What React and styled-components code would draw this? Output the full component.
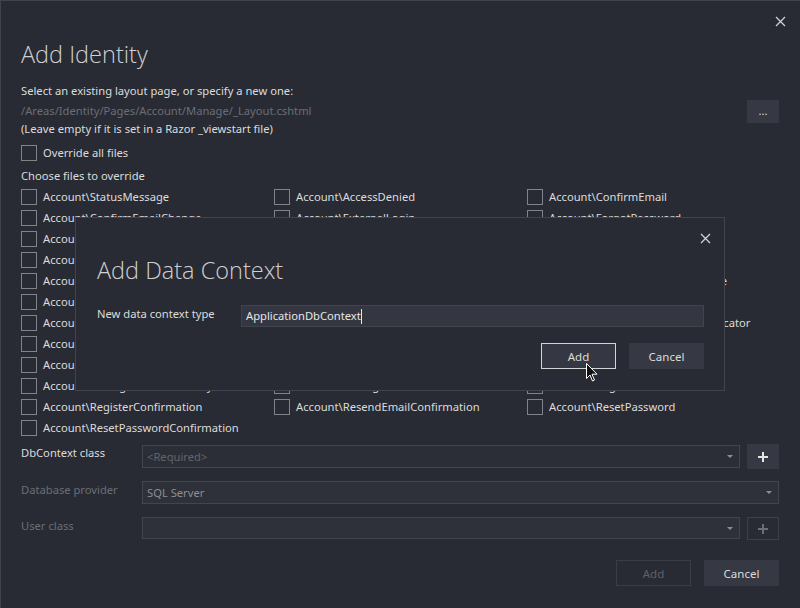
import React from 'react'
import styled, { createGlobalStyle, css } from 'styled-components'

const GlobalStyle = createGlobalStyle`
  html, body {
    margin: 0;
    padding: 0;
    background: #282b33;
  }
  body {
    font-family: "Noto Sans", "Open Sans", sans-serif;
    font-size: 11.2px;
    color: #dcdcdc;
  }
`

const files = [
  'StatusMessage', 'AccessDenied', 'ConfirmEmail',
  'ConfirmEmailChange', 'ExternalLogin', 'ForgotPassword',
  'ForgotPasswordConfirmation', 'Lockout', 'Login',
  'LoginWith2fa', 'LoginWithRecoveryCode', 'Logout',
  'Manage\\_Layout', 'Manage\\_ManageNav', 'Manage\\_StatusMessage',
  'Manage\\ChangePassword', 'Manage\\DeletePersonalData', 'Manage\\Disable2fa',
  'Manage\\DownloadPersonalData', 'Manage\\Email', 'Manage\\EnableAuthenticator',
  'Manage\\ExternalLogins', 'Manage\\GenerateRecoveryCodes', 'Manage\\Index',
  'Manage\\PersonalData', 'Manage\\ResetAuthenticator', 'Manage\\SetPassword',
  'Manage\\ShowRecoveryCodes', 'Manage\\TwoFactorAuthentication', 'Register',
  'RegisterConfirmation', 'ResendEmailConfirmation', 'ResetPassword',
  'ResetPasswordConfirmation'
]

const Window = styled.div`
  position: relative;
  box-sizing: border-box;
  width: 800px;
  height: 608px;
  padding: 37px 21px 0 20px;
  border-top: 1px solid #40434b;
  border-left: 1px solid #40434b;
  background: #282b33;
  display: flex;
  flex-direction: column;
  overflow: hidden;
`

const CloseButton = styled.button`
  position: absolute;
  top: ${p => p.$top}px;
  right: ${p => p.$right}px;
  width: 16px;
  height: 16px;
  padding: 0;
  border: 0;
  background: transparent;
  display: flex;
  align-items: center;
  justify-content: center;
`

const Title = styled.h1`
  margin: 0;
  font-family: "Open Sans", "Noto Sans", sans-serif;
  font-weight: 300;
  font-size: 23.5px;
  line-height: 32px;
  color: #cfd0d2;
`

const LayoutBlock = styled.div`
  margin-top: 12px;
  display: grid;
  grid-template-columns: 1fr 32px;
  align-items: center;
`

const Lines = styled.div`
  display: flex;
  flex-direction: column;
`

const Line = styled.div`
  line-height: 18px;
  margin-top: ${p => p.$mt || 0}px;
  color: ${p => (p.$dim ? '#6b6e76' : '#dcdcdc')};
`

const SmallButton = styled.button`
  width: 32px;
  height: 23px;
  margin-top: 2px;
  padding: 0;
  border: 0;
  background: #363943;
  color: #dcdcdc;
  font-family: inherit;
  font-size: 11px;
  line-height: 14px;
`

const CheckRow = styled.label`
  display: flex;
  align-items: center;
  height: ${p => p.$h || 21}px;
  white-space: nowrap;
  overflow: hidden;
`

const Box = styled.span`
  box-sizing: border-box;
  flex: none;
  width: 16px;
  height: 16px;
  border: 1px solid #80838a;
  margin-right: 6px;
`

const CheckText = styled.span`
  line-height: 18px;
  color: #dcdcdc;
`

const Override = styled.div`
  margin-top: 6px;
`

const SectionLabel = styled.div`
  margin-top: 5px;
  line-height: 18px;
`

const FileGrid = styled.div`
  margin-top: 1px;
  display: grid;
  grid-template-columns: repeat(3, 253px);
  grid-auto-rows: 21px;
`

const FormRow = styled.div`
  display: grid;
  grid-template-columns: 121px 1fr ${p => (p.$button ? '39px' : '')};
  align-items: start;
  margin-top: ${p => p.$mt}px;
`

const FieldLabel = styled.div`
  line-height: 18px;
  padding-top: ${p => p.$pt || 0}px;
  color: ${p => (p.$dim ? '#6b6e76' : '#dcdcdc')};
`

const Select = styled.div`
  box-sizing: border-box;
  height: ${p => p.$h || 23}px;
  margin-top: ${p => p.$mt || 0}px;
  border: 1px solid #42454d;
  background: ${p => p.$bg || '#2b2e36'};
  display: flex;
  align-items: center;
  padding: 0 6px 0 4px;
  color: ${p => p.$color || '#dcdcdc'};
  line-height: 18px;
`

const SelectValue = styled.span`
  flex: 1;
`

const Caret = styled.span`
  width: 0;
  height: 0;
  border-left: 3px solid transparent;
  border-right: 3px solid transparent;
  border-top: 3px solid #8c8f95;
`

const PlusButton = styled.button`
  box-sizing: border-box;
  justify-self: end;
  width: 32px;
  height: ${p => (p.$disabled ? 23 : 25)}px;
  padding: 0;
  display: flex;
  align-items: center;
  justify-content: center;
  border: ${p => (p.$disabled ? '1px solid #3d4048' : '0')};
  background: ${p => (p.$disabled ? 'transparent' : '#363943')};
`

const Footer = styled.div`
  margin-top: 20px;
  display: flex;
  justify-content: flex-end;
  gap: 13px;
`

const DialogButton = styled.button`
  box-sizing: border-box;
  width: 75px;
  height: 26px;
  padding: 0;
  font-family: inherit;
  font-size: 11.5px;
  ${p =>
    p.$variant === 'disabled' &&
    css`
      border: 1px solid #3a3d45;
      background: transparent;
      color: #5e6169;
    `}
  ${p =>
    p.$variant === 'focused' &&
    css`
      border: 1px solid #d2d3d5;
      background: #353842;
      color: #dcdcdc;
    `}
  ${p =>
    (!p.$variant || p.$variant === 'normal') &&
    css`
      border: 0;
      background: #363943;
      color: #dcdcdc;
    `}
`

const Modal = styled.div`
  position: absolute;
  left: 74px;
  top: 216px;
  box-sizing: border-box;
  width: 650px;
  height: 174px;
  padding: 36px 20px 0 21px;
  border: 1px solid #41444c;
  background: #282b33;
  display: flex;
  flex-direction: column;
`

const ModalRow = styled.div`
  margin-top: 19px;
  display: grid;
  grid-template-columns: 144px 1fr;
  align-items: start;
`

const TextInput = styled.div`
  box-sizing: border-box;
  height: 22px;
  border: 1px solid #41444c;
  background: #343741;
  padding: 0 4px;
  display: flex;
  align-items: center;
  line-height: 18px;
  color: #e6e6e6;
`

const TextCaret = styled.span`
  display: inline-block;
  width: 1px;
  height: 15px;
  background: #e6e6e6;
`

const ModalFooter = styled.div`
  margin-top: 16px;
  display: flex;
  justify-content: flex-end;
  gap: 13px;
`

const Pointer = styled.svg`
  position: absolute;
  left: 585px;
  top: 362px;
`

const XIcon = () => (
  <svg width="11" height="11" viewBox="0 0 11 11">
    <path d="M1 1 L10 10 M10 1 L1 10" stroke="#d0d1d3" strokeWidth="1.3" fill="none" />
  </svg>
)

const PlusIcon = ({ color }) => (
  <svg width="12" height="12" viewBox="0 0 12 12">
    <path d="M6 1 V11 M1 6 H11" stroke={color} strokeWidth="2" fill="none" />
  </svg>
)

const Check = ({ children, h }) => (
  <CheckRow $h={h}>
    <Box />
    <CheckText>{children}</CheckText>
  </CheckRow>
)

export default function App() {
  return (
    <>
      <GlobalStyle />
      <Window>
        <CloseButton $top={12} $right={12}>
          <XIcon />
        </CloseButton>
        <Title>Add Identity</Title>
        <LayoutBlock>
          <Lines>
            <Line>Select an existing layout page, or specify a new one:</Line>
            <Line $dim $mt={2}>/Areas/Identity/Pages/Account/Manage/_Layout.cshtml</Line>
            <Line>(Leave empty if it is set in a Razor _viewstart file)</Line>
          </Lines>
          <SmallButton>...</SmallButton>
        </LayoutBlock>
        <Override>
          <Check h={18}>Override all files</Check>
        </Override>
        <SectionLabel>Choose files to override</SectionLabel>
        <FileGrid>
          {files.map(f => (
            <Check key={f}>{'Account\\' + f}</Check>
          ))}
        </FileGrid>
        <FormRow $button $mt={6}>
          <FieldLabel>DbContext class</FieldLabel>
          <Select $mt={1} $color="#62656d">
            <SelectValue>&lt;Required&gt;</SelectValue>
            <Caret />
          </Select>
          <PlusButton>
            <PlusIcon color="#e4e4e4" />
          </PlusButton>
        </FormRow>
        <FormRow $mt={12}>
          <FieldLabel $dim>Database provider</FieldLabel>
          <Select $bg="#2e3139" $color="#8b8e94">
            <SelectValue>SQL Server</SelectValue>
            <Caret />
          </Select>
        </FormRow>
        <FormRow $button $mt={13}>
          <FieldLabel $dim>User class</FieldLabel>
          <Select $h={22} $bg="#2e3139">
            <SelectValue />
            <Caret />
          </Select>
          <PlusButton $disabled>
            <PlusIcon color="#6b6e76" />
          </PlusButton>
        </FormRow>
        <Footer>
          <DialogButton $variant="disabled">Add</DialogButton>
          <DialogButton>Cancel</DialogButton>
        </Footer>

        <Modal>
          <CloseButton $top={12} $right={11}>
            <XIcon />
          </CloseButton>
          <Title>Add Data Context</Title>
          <ModalRow>
            <FieldLabel>New data context type</FieldLabel>
            <TextInput>
              ApplicationDbContext
              <TextCaret />
            </TextInput>
          </ModalRow>
          <ModalFooter>
            <DialogButton $variant="focused">Add</DialogButton>
            <DialogButton>Cancel</DialogButton>
          </ModalFooter>
        </Modal>
        <Pointer width="12" height="19" viewBox="0 0 12 19">
          <path
            d="M0.5 0.5 L0.5 15.5 L4 12 L6.5 18 L8.5 17 L6 11.2 L11 11.2 Z"
            fill="#111"
            stroke="#fff"
            strokeWidth="1"
          />
        </Pointer>
      </Window>
    </>
  )
}
